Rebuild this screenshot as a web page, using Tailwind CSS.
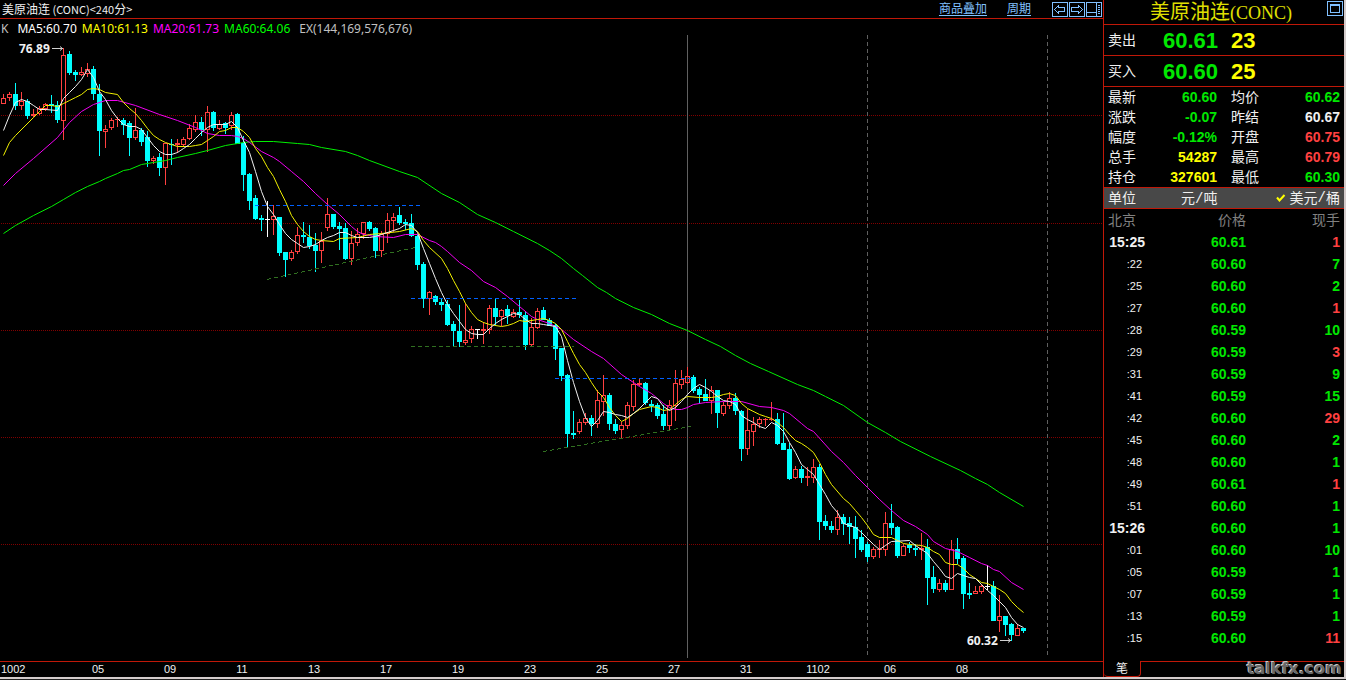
<!DOCTYPE html>
<html lang="zh-CN">
<head>
<meta charset="utf-8">
<title>美原油连(CONC)</title>
<script src="https://cdn.jsdelivr.net/npm/@tailwindcss/browser@4"></script>
</head>
<body class="flex h-screen flex-col overflow-hidden bg-black font-['Liberation_Sans','Noto_Sans_CJK_SC',sans-serif] text-[#f0f0f0]">
<div class="flex min-h-0 flex-1">
  <main class="flex min-w-0 flex-1 flex-col">
    <header class="flex h-[19px] shrink-0 items-center border-b border-[#c01808] pl-0.5 text-xs leading-4">
      <h1 class="flex-1 whitespace-nowrap">美原油连<span class="font-['Noto_Sans_CJK_SC',sans-serif] text-[11px]"> (CONC)&lt;240</span>分<span class="font-['Noto_Sans_CJK_SC',sans-serif] text-[11px]">&gt;</span></h1>
      <nav class="flex items-center text-[#80c0ff]">
        <a href="#overlay" class="mr-5 underline underline-offset-2">商品叠加</a>
        <a href="#period" class="mr-[21px] underline underline-offset-2">周期</a>
        <button aria-label="向左" class="mr-px"><svg class="block" width="16" height="15" viewBox="0 0 16 15" fill="none" stroke="#80c0ff" shape-rendering="crispEdges"><path d="M.5.5h15v14h-15z"/><path d="M2.5 7.5l4-4v2h6v4h-6v2z"/></svg></button>
        <button aria-label="向右" class="mr-px"><svg class="block" width="16" height="15" viewBox="0 0 16 15" fill="none" stroke="#80c0ff" shape-rendering="crispEdges"><path d="M.5.5h15v14h-15z"/><path d="M13.5 7.5l-4-4v2h-7v4h7v2z"/></svg></button>
        <button aria-label="侧栏" class="mr-px"><svg class="block" width="16" height="15" viewBox="0 0 16 15" fill="none" stroke="#80c0ff" shape-rendering="crispEdges"><path d="M.5.5h15v14h-15zM10.5 0v15M0 10.5h10M12 3.5h2M12 5.5h2M12 7.5h2M12 9.5h2M12 11.5h2"/></svg></button>
      </nav>
    </header>
    <div class="flex h-4 shrink-0 gap-[5px] whitespace-nowrap pl-px font-['Noto_Sans',sans-serif] text-xs leading-5">
      <span class="mr-1 text-[#c0c0c0]">K</span>
      <span class="text-white">MA5:60.70</span>
      <span class="text-[#ffff00]">MA10:61.13</span>
      <span class="text-[#ff00ff]">MA20:61.73</span>
      <span class="text-[#00ff00]">MA60:64.06</span>
      <span class="ml-1 text-[#c0c0c0]">EX(144,169,576,676)</span>
    </div>
    <svg id="chart" class="block min-h-0 w-full flex-1" viewBox="0 35 1103 626" role="img" aria-label="240分钟K线图">
      <g stroke="#800000" stroke-dasharray="1 1" shape-rendering="crispEdges">
        <path d="M1 115.5H1103"/><path d="M1 223.5H1103"/><path d="M1 330.5H1103"/><path d="M1 437.5H1103"/><path d="M1 544.5H1103"/>
      </g>
      <g stroke="#606060" shape-rendering="crispEdges">
        <path d="M687.5 35V658"/>
        <path stroke-dasharray="4 3" d="M867.5 35V656M1047.5 35V656"/>
      </g>
      <g id="candles" shape-rendering="crispEdges"></g>
      <g id="averages" fill="none" stroke-width="1"></g>
      <g fill="none" stroke-dasharray="4 3" shape-rendering="crispEdges">
        <path stroke="#0060ff" d="M411 298.5H577M555 378.5H693"/>
        <path stroke="#0060ff" d="M255 205.5H421"/>
        <path stroke="#307020" d="M267 279.5L415 247.5M411 346.5H574M543 451.5L691 426.5"/>
      </g>
      <g font-family="Noto Sans, sans-serif" font-size="12" font-weight="700" fill="#f0f0f0">
        <text x="19" y="53">76.89</text>
        <text x="967" y="645">60.32</text>
      </g>
      <path d="M52 48.5H63M60 46.5l2.5 2-2.5 2M1000 640.5H1011M1008 638.5l2.5 2-2.5 2" fill="none" stroke="#d0d0d0"/>
    </svg>
    <div class="grid h-4 shrink-0 grid-cols-[62fr_repeat(13,72fr)_105fr] border-t border-[#c01808] text-center text-[11px] leading-[14px]">
      <span class="pl-px text-left">1002</span><span>05</span><span>09</span><span>11</span><span>13</span><span>17</span><span>19</span><span>23</span><span>25</span><span>27</span><span>31</span><span>1102</span><span>06</span><span>08</span>
    </div>
  </main>

  <aside class="flex w-[243px] shrink-0 flex-col border-r-2 border-l border-l-[#c01808] border-r-[#d4cccc]">
    <div class="flex h-[25px] items-center border-b border-[#c01808] pr-px text-[#e0e000]">
      <h2 class="flex-1 pl-[46px] text-xl leading-6 whitespace-nowrap">美原油连<span class="font-['Liberation_Serif',serif] text-lg leading-6">(CONC)</span></h2>
      <button aria-label="最大化" class="self-start pt-px"><svg class="block" width="16" height="15" viewBox="0 0 16 15" fill="none" stroke="#80c0ff" shape-rendering="crispEdges"><path d="M.5.5h15v14h-15zM3.5 3.5h9v8h-9zM3 4.5h10"/></svg></button>
    </div>
    <div class="flex h-[31px] items-center border-b border-[#c01808] pl-1">
      <span class="w-[55px] text-sm">卖出</span><b class="w-[68px] text-[22px] text-[#00e800]">60.61</b><b class="text-[22px] text-[#ffff00]">23</b>
    </div>
    <div class="flex h-[31px] items-center border-b border-[#c01808] pl-1">
      <span class="w-[55px] text-sm">买入</span><b class="w-[68px] text-[22px] text-[#00e800]">60.60</b><b class="text-[22px] text-[#ffff00]">25</b>
    </div>
    <table class="w-full table-fixed text-sm leading-5">
      <colgroup><col class="w-10"><col class="w-[73px]"><col class="w-[53px]"><col></colgroup>
      <tbody id="quote"></tbody>
    </table>
    <div class="flex h-[22px] shrink-0 items-center border-y border-[#c01808] bg-[#484848] px-1 text-sm leading-5">
      <span class="w-[73px]">单位</span>
      <button class="flex-1 text-left">元<span class="font-['Liberation_Mono',monospace]">/</span>吨</button>
      <button class="flex items-center"><svg class="mr-1" width="10" height="8" viewBox="0 0 10 8" fill="none" stroke="#ffff00" stroke-width="2"><path d="M1 3.5L3.5 6.5 8.5 1"/></svg>美元<span class="font-['Liberation_Mono',monospace]">/</span>桶</button>
    </div>
    <table class="w-full table-fixed text-right text-sm font-bold">
      <colgroup><col class="w-[42px]"><col class="w-[100px]"><col></colgroup>
      <thead><tr class="h-[22px] text-[#808080] leading-5"><th class="pl-1 text-left font-normal">北京</th><th class="font-normal">价格</th><th class="pr-1 font-normal">现手</th></tr></thead>
      <tbody id="ticks"></tbody>
    </table>
    <div class="mt-auto flex h-4 shrink-0">
      <button class="h-4 w-[37px] shrink-0 rounded-b-sm border-r border-b border-[#c01808] text-xs leading-4">笔</button>
      <div class="flex-1 border-t border-[#c01808] pr-0.5 text-right font-['DejaVu_Sans',sans-serif] text-base leading-[14px] font-bold text-[#686868] [text-shadow:-1px_-1px_0_#c8c8c8]">talkfx.com</div>
    </div>
  </aside>
</div>
<div class="h-[3px] shrink-0 border-t-2 border-[#d4cccc] bg-[#202020]"></div>

<script>
// One candle per entry: kind (r rising, c falling, w flat), high, body top, body bottom, low.
const candles = `r 94 98 103 103,r 92 94 97 100,c 83 94 105 109,r 92 101 105 109,c 99 101 115 118,r 109 114 115 116,r 106 108 113 114,r 103 104 108 110,c 95 104 105 112,c 101 105 119 122,r 48 55 120 139,c 51 54 72 74,c 70 72 74 80,r 67 72 74 75,r 63 69 73 76,c 66 69 93 99,c 84 94 130 155,r 125 129 131 147,r 118 120 127 129,r 117 119 119 126,c 118 120 124 134,c 121 123 137 155,r 108 130 137 139,c 128 130 141 145,c 131 137 160 166,r 156 158 160 163,c 153 157 167 175,r 143 143 167 184,c 139 144 144 164,r 139 143 144 152,r 137 139 144 145,r 124 128 138 139,r 115 122 129 131,c 117 122 129 135,r 106 112 129 151,c 111 112 127 130,r 120 124 128 129,c 122 123 127 133,r 112 115 125 129,c 113 114 143 143,c 136 143 174 190,c 173 174 200 209,c 195 198 218 219,c 215 218 219 230,w 201 219 219 236,r 205 216 219 234,c 217 217 252 255,c 252 252 259 276,r 250 252 258 260,r 227 235 251 253,c 222 235 236 242,c 225 237 245 248,c 233 245 250 271,r 232 241 250 262,r 198 214 227 230,c 214 214 226 228,c 222 226 228 249,c 223 228 258 259,r 231 243 258 264,r 228 234 242 245,r 222 222 233 238,c 221 222 228 230,c 227 228 250 257,r 231 234 250 256,r 213 220 233 242,r 213 217 220 231,c 207 215 222 224,c 219 222 223 229,c 214 223 235 236,c 235 236 264 269,c 262 264 298 307,r 291 292 298 314,c 295 296 301 304,c 299 302 304 310,c 300 304 324 325,c 321 324 330 345,c 305 331 341 346,r 303 340 342 344,r 326 329 338 342,w 329 329 329 338,r 322 329 330 343,r 305 308 329 333,c 299 308 316 324,r 309 310 316 325,c 305 309 315 323,r 309 312 316 317,c 300 312 314 317,c 311 315 344 349,r 318 327 344 345,r 308 311 327 328,c 307 310 319 319,c 318 320 325 325,c 324 325 348 359,c 348 348 375 380,c 374 375 433 446,c 411 433 434 438,r 419 422 431 433,r 413 418 422 424,c 415 418 423 435,r 390 400 423 427,r 375 395 401 415,c 393 395 423 429,c 419 424 430 433,r 422 425 429 437,r 402 405 425 428,r 380 384 406 410,r 378 383 384 385,c 382 383 402 404,c 400 404 405 411,c 403 405 415 418,c 405 414 425 429,r 400 405 425 429,r 370 383 405 420,r 370 379 384 388,r 367 376 382 383,c 375 377 390 392,c 387 389 394 402,c 379 394 400 400,r 386 390 400 413,c 390 390 412 427,r 402 405 413 415,r 392 398 405 408,c 393 398 410 414,c 410 411 448 460,r 409 430 448 454,r 417 424 431 445,r 417 419 423 427,r 418 419 419 425,r 402 419 419 420,c 413 419 443 444,c 413 443 449 449,c 443 449 478 479,r 466 469 477 478,c 466 469 477 482,r 467 476 477 485,r 459 467 477 482,c 464 467 521 539,c 515 521 525 529,c 521 526 529 532,r 510 517 529 534,c 514 517 523 534,c 517 523 526 543,c 516 527 538 557,c 530 537 549 551,c 542 544 556 561,r 547 549 556 558,r 540 549 549 557,r 512 523 549 555,c 504 523 527 534,c 526 527 555 557,r 544 546 555 555,c 542 545 547 552,c 544 548 549 555,r 533 548 549 559,c 539 547 577 604,c 566 577 588 592,r 579 583 589 591,c 580 583 589 591,r 540 549 589 589,c 538 549 558 563,c 556 558 593 608,c 583 593 594 598,r 586 591 593 593,r 584 586 591 593,w 565 586 586 589,c 581 586 620 620,r 595 616 620 631,c 616 616 624 635,c 623 624 634 640,r 624 628 635 635,c 628 628 630 632`.split(',').map(s => s.split(' '));
const averages = {
  '#00f000': '3,233 15,225 33,215 51,206 63,199 75,192 87,186 99,181 105,178 117,173 123,170 129,169 141,164 153,162 165,160 177,157 195,153 207,150 225,145 243,142 255,141 273,141 297,143 309,144 321,147 345,151 357,155 369,160 399,171 417,177 441,193 459,202 477,214 495,222 513,231 537,243 549,250 561,258 573,268 582,275 597,287 606,292 615,298 633,307 651,314 669,323 687,330 705,339 720,346 735,355 750,363 768,371 797,384 813,390 825,396 843,405 867,422 885,432 900,441 930,456 960,470 975,478 987,484 999,492 1023,506',
  '#f000f0': '3,185 15,173 33,158 57,137 69,122 81,111 93,104 105,100 117,100 135,105 159,114 177,120 195,127 207,133 219,135 231,135 237,136 243,138 249,142 261,151 273,157 279,161 291,171 303,181 315,193 327,204 339,214 351,226 357,231 363,234 375,236 393,237 405,234 417,234 429,240 435,242 441,246 447,251 459,262 471,270 483,281 495,287 507,296 519,306 531,316 537,319 549,323 561,329 573,339 591,351 603,358 621,374 639,386 651,393 663,403 669,407 675,409 681,409 687,407 693,404 705,402 723,401 741,401 759,406 771,407 783,410 789,413 801,423 807,428 813,431 831,451 843,462 855,475 867,487 879,499 891,510 903,520 915,526 927,534 933,541 945,548 957,551 969,557 981,563 987,565 993,569 999,571 1011,582 1023,589',
  '#f0f000': '3,155 9,142 15,135 33,117 39,111 45,105 51,105 57,106 63,103 69,100 75,97 81,94 87,89 93,88 99,89 105,92 117,94 123,102 129,108 135,113 141,120 147,128 153,135 159,139 165,142 171,144 177,146 189,146 195,145 201,144 207,140 213,136 219,131 225,130 231,127 237,127 243,131 249,137 255,148 261,156 267,167 273,176 279,189 285,201 291,215 297,224 303,231 309,236 315,239 321,240 333,241 339,238 357,237 369,234 381,233 399,231 411,228 417,231 423,240 429,247 441,258 447,268 453,280 459,291 465,303 471,312 477,319 483,322 489,324 501,326 507,325 513,323 519,320 525,321 537,319 543,318 549,320 555,323 561,329 567,341 573,353 579,364 585,372 591,382 597,391 603,397 609,407 615,415 621,421 627,418 633,413 639,409 651,406 657,407 663,410 669,409 675,404 681,399 687,396 699,397 711,397 717,396 723,394 729,393 735,395 741,403 747,408 759,414 765,416 771,418 777,422 783,427 789,434 795,440 801,443 807,447 813,452 819,462 825,474 831,484 843,498 849,503 855,510 861,517 867,525 873,534 879,537 891,537 897,540 903,543 909,544 921,545 927,547 933,551 939,554 945,562 951,564 957,564 963,568 969,574 975,578 981,582 987,583 993,586 999,589 1005,593 1011,601 1017,607 1023,612',
  '#f0f0f0': '3,130 9,115 15,102 21,99 27,101 33,105 39,109 45,109 57,110 63,98 69,92 75,86 81,79 87,69 93,77 99,91 105,99 111,110 117,118 123,124 129,126 135,126 141,129 147,137 153,145 159,151 165,154 171,154 177,152 183,148 189,144 195,138 201,132 207,127 213,124 225,124 231,121 237,127 243,140 249,152 255,171 261,191 267,206 273,214 279,224 285,233 291,239 297,243 303,247 309,246 315,244 321,240 327,237 333,235 339,232 345,232 351,235 357,237 369,237 375,236 381,234 393,230 399,228 405,224 411,225 417,232 423,248 429,263 435,278 441,292 447,304 453,313 459,321 465,329 471,333 477,334 483,334 489,328 495,323 501,319 507,316 513,313 519,314 525,319 531,323 537,323 543,324 549,325 555,326 561,336 567,360 573,382 579,401 585,417 591,426 597,420 603,411 609,412 615,414 621,415 627,417 633,413 639,408 645,402 651,396 657,398 663,406 669,410 675,407 681,401 687,394 693,388 699,384 705,387 711,391 717,396 723,400 729,401 735,404 741,415 747,419 753,422 759,426 765,428 771,422 777,425 783,431 789,442 795,452 801,464 807,469 813,474 819,484 825,494 831,505 837,512 843,523 849,525 855,527 861,532 867,538 873,544 879,549 885,545 891,541 909,540 915,545 921,549 927,553 933,561 939,568 945,576 951,578 957,573 963,575 969,577 975,578 981,584 987,590 993,595 999,601 1005,607 1011,617 1017,624 1023,627'
};
const color = { r: '#ff4040', c: '#00ffff', w: '#ffffff' };
document.getElementById('candles').innerHTML = candles.map(([k, h, t, b, l], i) => {
  [h, t, b, l] = [h, t, b, l].map(Number);
  const x = 3 + 6 * i, f = color[k];
  if (k === 'r' && b - t > 1) {
    return `<path fill="none" stroke="${f}" d="M${x + .5} ${h}V${t}M${x + .5} ${b + 1}V${l + 1}M${x - 1.5} ${t + .5}h4V${b + .5}h-4z"/>`;
  }
  return `<path fill="${f}" d="M${x} ${h}h1V${l + 1}h-1zM${x - 2} ${t}h5V${b + 1}h-5z"/>`;
}).join('');
document.getElementById('averages').innerHTML = Object.entries(averages).map(([c, p]) =>
  `<polyline stroke="${c}" transform="translate(.5 .5)" points="${p}"/>`).join('');

const tone = { g: 'text-[#00e800]', r: 'text-[#ff4040]', y: 'text-[#ffff00]', w: 'text-[#f0f0f0]' };
const quote = [['最新', '60.60', 'g', '均价', '60.62', 'g'], ['涨跌', '-0.07', 'g', '昨结', '60.67', 'w'], ['幅度', '-0.12%', 'g', '开盘', '60.75', 'r'], ['总手', '54287', 'y', '最高', '60.79', 'r'], ['持仓', '327601', 'y', '最低', '60.30', 'g']];
document.getElementById('quote').innerHTML = quote.map(q =>
  `<tr class="h-5"><th class="pl-1 text-left font-normal">${q[0]}</th><td class="text-right font-bold ${tone[q[2]]}">${q[1]}</td><th class="pl-3.5 text-left font-normal">${q[3]}</th><td class="pr-1 text-right font-bold ${tone[q[5]]}">${q[4]}</td></tr>`).join('');
const ticks = '15:25 60.61 1 r,:22 60.60 7 g,:25 60.60 2 g,:27 60.60 1 r,:28 60.59 10 g,:29 60.59 3 r,:31 60.59 9 g,:41 60.59 15 g,:42 60.60 29 r,:45 60.60 2 g,:48 60.60 1 g,:49 60.61 1 r,:51 60.60 1 g,15:26 60.60 1 g,:01 60.60 10 g,:05 60.59 1 g,:07 60.59 1 g,:13 60.59 1 g,:15 60.60 11 r';
document.getElementById('ticks').innerHTML = ticks.split(',').map(s => {
  const [t, p, n, c] = s.split(' ');
  return `<tr class="h-[22px] leading-5"><td class="${t[0] === ':' ? 'pr-1 text-[11px] font-normal' : 'pr-px'}">${t}</td><td class="text-[#00e800]">${p}</td><td class="pr-1 ${tone[c]}">${n}</td></tr>`;
}).join('');
</script>
</body>
</html>
